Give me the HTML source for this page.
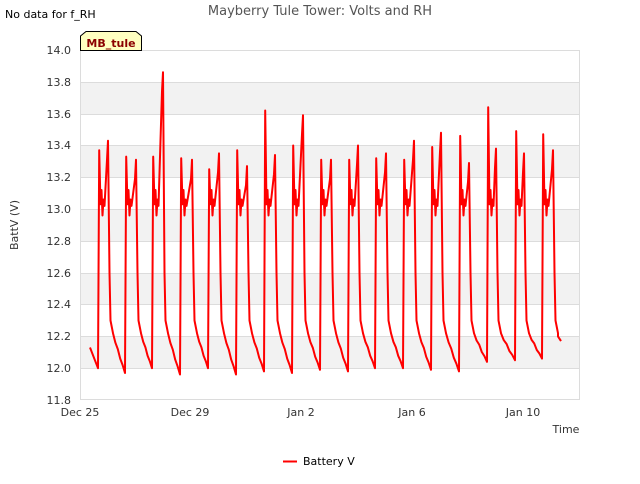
<!DOCTYPE html>
<html><head><style>
body{margin:0;background:#fff;font-family:"DejaVu Sans","Liberation Sans",sans-serif;}
</style></head><body>
<svg id="s" width="640" height="480" xmlns="http://www.w3.org/2000/svg" font-family="DejaVu Sans, Liberation Sans, sans-serif">
<rect width="640" height="480" fill="#fff"/>
<g fill="#f2f2f2">
<rect x="80" y="82" width="500" height="32"/>
<rect x="80" y="145" width="500" height="32"/>
<rect x="80" y="209" width="500" height="32"/>
<rect x="80" y="273" width="500" height="32"/>
<rect x="80" y="336" width="500" height="32"/>
</g>
<g stroke="#dcdcdc" stroke-width="1">
<line x1="80" x2="580" y1="50.5" y2="50.5"/><line x1="80" x2="580" y1="82.5" y2="82.5"/>
<line x1="80" x2="580" y1="114.5" y2="114.5"/><line x1="80" x2="580" y1="145.5" y2="145.5"/>
<line x1="80" x2="580" y1="177.5" y2="177.5"/><line x1="80" x2="580" y1="209.5" y2="209.5"/>
<line x1="80" x2="580" y1="241.5" y2="241.5"/><line x1="80" x2="580" y1="273.5" y2="273.5"/>
<line x1="80" x2="580" y1="304.5" y2="304.5"/><line x1="80" x2="580" y1="336.5" y2="336.5"/>
<line x1="80" x2="580" y1="368.5" y2="368.5"/>
<line x1="80.5" x2="80.5" y1="50" y2="400"/><line x1="579.5" x2="579.5" y1="50" y2="400"/>
<line x1="80" x2="580" y1="399.5" y2="399.5"/>
</g>
<g font-size="11" fill="#333" text-anchor="end">
<text x="71" y="54">14.0</text><text x="71" y="86">13.8</text><text x="71" y="118">13.6</text>
<text x="71" y="149">13.4</text><text x="71" y="181">13.2</text><text x="71" y="213">13.0</text>
<text x="71" y="245">12.8</text><text x="71" y="277">12.6</text><text x="71" y="308">12.4</text>
<text x="71" y="340">12.2</text><text x="71" y="372">12.0</text><text x="71" y="404">11.8</text>
</g>
<g font-size="11" fill="#333" text-anchor="middle">
<text x="80" y="416">Dec 25</text><text x="190" y="416">Dec 29</text><text x="301" y="416">Jan 2</text>
<text x="412" y="416">Jan 6</text><text x="523" y="416">Jan 10</text>
</g>
<text x="566" y="433" font-size="11" fill="#333" text-anchor="middle">Time</text>
<text transform="translate(18,225) rotate(-90)" font-size="11" fill="#333" text-anchor="middle">BattV (V)</text>
<text x="320" y="15" font-size="13" fill="#555" text-anchor="middle">Mayberry Tule Tower: Volts and RH</text>
<text x="5" y="18" font-size="11" fill="#000">No data for f_RH</text>
<path d="M80.5,50.5 L80.5,36 L86,31.5 L136,31.5 L141.5,36 L141.5,50.5 Z" fill="#ffffc0" stroke="#000"/>
<text x="111" y="47" font-size="11" font-weight="bold" fill="#8b0000" text-anchor="middle">MB_tule</text>
<path id="p" fill="none" stroke="#ff0000" stroke-width="2" stroke-linejoin="round"/>
<line x1="283" x2="297" y1="461.5" y2="461.5" stroke="#ff0000" stroke-width="2"/>
<text x="303" y="465" font-size="11" fill="#000">Battery V</text>
</svg>
<script>
function y(v){return 50+(14-v)*159.09;}
var c=[[98,12.0,13.37,108,13.43],[125,11.97,13.33,136,13.31],[152,12.0,13.33,163,13.86],[180,11.96,13.32,192,13.31],[208,12.0,13.25,219,13.35],[236,11.96,13.37,247,13.27],[264,11.98,13.62,275,13.34],[292,11.97,13.40,303,13.59],[320,11.99,13.31,331,13.31],[348,11.98,13.31,358,13.40],[375,12.0,13.32,386,13.35],[403,12.0,13.31,414,13.43],[431,11.99,13.39,441,13.48],[459,11.98,13.46,469,13.29],[487,12.04,13.64,496,13.38],[515,12.05,13.49,524,13.35],[542,12.06,13.47,553,13.37]];
var pts=[[90,12.13]];
for(var i=0;i<c.length;i++){var m=c[i];
 if(i>0){var pp=c[i-1][3];var n=m[0]-(pp+5);for(var k=1;k<=4;k++){pts.push([pp+5+n*k/5,12.22-(12.22-m[1])*k/5-(k%2?0.01:0)]);}}
 pts.push([m[0],m[1]]);pts.push([m[0]+1.2,m[2]]);pts.push([m[0]+2.5,13.03]);pts.push([m[0]+3.5,13.12]);pts.push([m[0]+4.5,12.96]);pts.push([m[0]+5.5,13.06]);pts.push([m[0]+6.5,13.02]);pts.push([m[3]-1,m[4]-0.12]);pts.push([m[3],m[4]]);pts.push([m[3]+1.5,12.6]);pts.push([m[3]+2.5,12.3]);pts.push([m[3]+5,12.22]);}
pts.push([558,12.2]);pts.push([561,12.17]);
var d="";for(var j=0;j<pts.length;j++){d+=(j?"L":"M")+pts[j][0].toFixed(1)+","+y(pts[j][1]).toFixed(1);}
document.getElementById("p").setAttribute("d",d);
</script>
</body></html>
